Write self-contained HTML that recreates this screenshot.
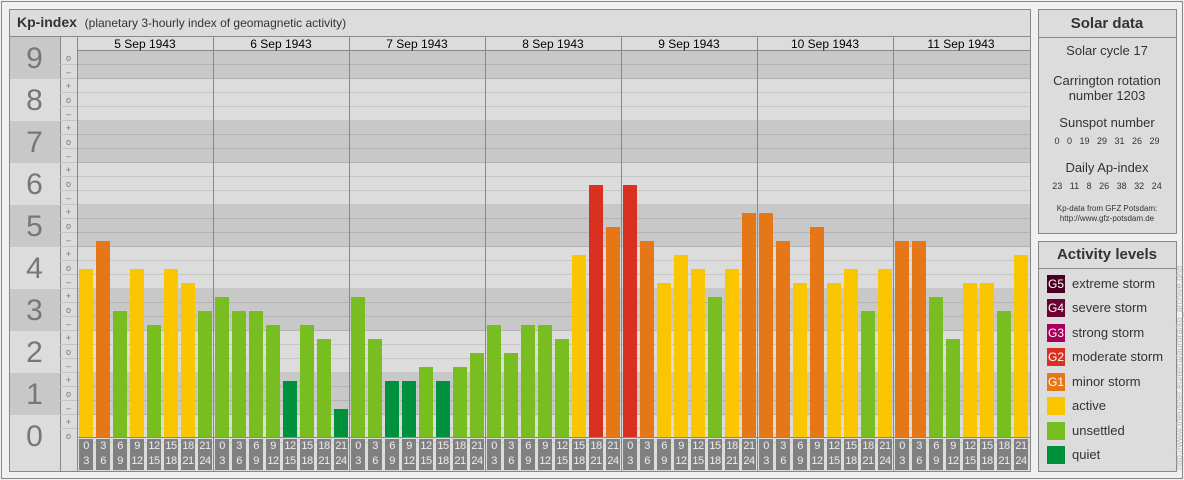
<!DOCTYPE html>
<html><head><meta charset="utf-8"><style>
*{margin:0;padding:0;box-sizing:border-box}
body{width:1184px;height:480px;background:#f0f0f0;font-family:"Liberation Sans",sans-serif;position:relative;overflow:hidden}
.a{position:absolute}
#frame{left:1px;top:1px;width:1182px;height:478px;border:1px solid #888}
.panel{background:#dcdcdc;border:1px solid #888}
.num{position:absolute;left:9px;width:51px;font-size:30px;color:#777;text-align:center}
.sg{position:absolute;left:60px;width:17px;height:14px;font-size:9px;color:#777;text-align:center;line-height:14px;border-bottom:1px solid #c4c4c4}
.d{position:absolute;top:37px;width:136px;height:14px;font-size:12px;text-align:center;line-height:15px}
.vl{position:absolute;top:37px;width:1px;height:434px;background:#888}
.b{position:absolute;width:14px}
.y{background:#f9c600}.o{background:#e57716}.g{background:#78be20}.q{background:#00913f}.r{background:#d93020}
.l{position:absolute;top:439px;width:14px;height:31px;background:#808080;color:#eee;font-size:11px;line-height:15px;text-align:center;letter-spacing:-0.5px}
.sw{position:absolute;left:1047px;width:18px;height:18px;color:#fff;font-size:12px;line-height:18px;text-align:center}
.lt{position:absolute;left:1072px;font-size:13px;color:#333;line-height:18px}
.sd{position:absolute;left:1038px;width:138px;text-align:center;color:#333}
</style></head><body>
<div class="a" id="frame"></div>
<div class="a panel" style="left:9px;top:9px;width:1022px;height:463px"></div>
<div class="a" style="left:10px;top:10px;width:1020px;height:27px;border-bottom:1px solid #888"></div>
<div class="a" style="left:17px;top:14px;font-size:14px;color:#333"><b>Kp-index</b>&nbsp;&nbsp;<span style="font-size:12px">(planetary 3-hourly index of geomagnetic activity)</span></div>
<div class="a" style="left:10px;top:37px;width:50px;height:42px;background:#c8c8c8"></div>
<div class="a" style="left:77px;top:51px;width:953px;height:28px;background:#c8c8c8"></div>
<div class="a" style="left:10px;top:121px;width:50px;height:42px;background:#c8c8c8"></div>
<div class="a" style="left:77px;top:121px;width:953px;height:42px;background:#c8c8c8"></div>
<div class="a" style="left:10px;top:205px;width:50px;height:42px;background:#c8c8c8"></div>
<div class="a" style="left:77px;top:205px;width:953px;height:42px;background:#c8c8c8"></div>
<div class="a" style="left:10px;top:289px;width:50px;height:42px;background:#c8c8c8"></div>
<div class="a" style="left:77px;top:289px;width:953px;height:42px;background:#c8c8c8"></div>
<div class="a" style="left:10px;top:373px;width:50px;height:42px;background:#c8c8c8"></div>
<div class="a" style="left:77px;top:373px;width:953px;height:42px;background:#c8c8c8"></div>
<div class="a" style="left:77px;top:51px;width:953px;height:392px;background:repeating-linear-gradient(to bottom,transparent 0 13px,rgba(0,0,0,0.1) 13px 14px)"></div>
<div class="a" style="left:77px;top:50px;width:953px;height:1px;background:#888"></div>
<div class="a" style="left:60px;top:37px;width:1px;height:434px;background:#888"></div>
<div class="a" style="left:77px;top:37px;width:1px;height:434px;background:#888"></div>
<div class="num" style="top:42px">9</div>
<div class="num" style="top:84px">8</div>
<div class="num" style="top:126px">7</div>
<div class="num" style="top:168px">6</div>
<div class="num" style="top:210px">5</div>
<div class="num" style="top:252px">4</div>
<div class="num" style="top:294px">3</div>
<div class="num" style="top:336px">2</div>
<div class="num" style="top:378px">1</div>
<div class="num" style="top:420px">0</div>
<div class="sg" style="top:51px">o</div><div class="sg" style="top:65px">–</div>
<div class="sg" style="top:79px">+</div><div class="sg" style="top:93px">o</div><div class="sg" style="top:107px">–</div>
<div class="sg" style="top:121px">+</div><div class="sg" style="top:135px">o</div><div class="sg" style="top:149px">–</div>
<div class="sg" style="top:163px">+</div><div class="sg" style="top:177px">o</div><div class="sg" style="top:191px">–</div>
<div class="sg" style="top:205px">+</div><div class="sg" style="top:219px">o</div><div class="sg" style="top:233px">–</div>
<div class="sg" style="top:247px">+</div><div class="sg" style="top:261px">o</div><div class="sg" style="top:275px">–</div>
<div class="sg" style="top:289px">+</div><div class="sg" style="top:303px">o</div><div class="sg" style="top:317px">–</div>
<div class="sg" style="top:331px">+</div><div class="sg" style="top:345px">o</div><div class="sg" style="top:359px">–</div>
<div class="sg" style="top:373px">+</div><div class="sg" style="top:387px">o</div><div class="sg" style="top:401px">–</div>
<div class="sg" style="top:415px">+</div><div class="sg" style="top:429px;border:none">o</div>
<div class="d" style="left:77px">5 Sep 1943</div>
<div class="d" style="left:213px">6 Sep 1943</div>
<div class="d" style="left:349px">7 Sep 1943</div>
<div class="d" style="left:485px">8 Sep 1943</div>
<div class="d" style="left:621px">9 Sep 1943</div>
<div class="d" style="left:757px">10 Sep 1943</div>
<div class="d" style="left:893px">11 Sep 1943</div>
<div class="vl" style="left:213px"></div><div class="vl" style="left:349px"></div><div class="vl" style="left:485px"></div><div class="vl" style="left:621px"></div><div class="vl" style="left:757px"></div><div class="vl" style="left:893px"></div>
<div class="b y" style="left:79px;top:269px;height:168px"></div>
<div class="b o" style="left:96px;top:241px;height:196px"></div>
<div class="b g" style="left:113px;top:311px;height:126px"></div>
<div class="b y" style="left:130px;top:269px;height:168px"></div>
<div class="b g" style="left:147px;top:325px;height:112px"></div>
<div class="b y" style="left:164px;top:269px;height:168px"></div>
<div class="b y" style="left:181px;top:283px;height:154px"></div>
<div class="b g" style="left:198px;top:311px;height:126px"></div>
<div class="b g" style="left:215px;top:297px;height:140px"></div>
<div class="b g" style="left:232px;top:311px;height:126px"></div>
<div class="b g" style="left:249px;top:311px;height:126px"></div>
<div class="b g" style="left:266px;top:325px;height:112px"></div>
<div class="b q" style="left:283px;top:381px;height:56px"></div>
<div class="b g" style="left:300px;top:325px;height:112px"></div>
<div class="b g" style="left:317px;top:339px;height:98px"></div>
<div class="b q" style="left:334px;top:409px;height:28px"></div>
<div class="b g" style="left:351px;top:297px;height:140px"></div>
<div class="b g" style="left:368px;top:339px;height:98px"></div>
<div class="b q" style="left:385px;top:381px;height:56px"></div>
<div class="b q" style="left:402px;top:381px;height:56px"></div>
<div class="b g" style="left:419px;top:367px;height:70px"></div>
<div class="b q" style="left:436px;top:381px;height:56px"></div>
<div class="b g" style="left:453px;top:367px;height:70px"></div>
<div class="b g" style="left:470px;top:353px;height:84px"></div>
<div class="b g" style="left:487px;top:325px;height:112px"></div>
<div class="b g" style="left:504px;top:353px;height:84px"></div>
<div class="b g" style="left:521px;top:325px;height:112px"></div>
<div class="b g" style="left:538px;top:325px;height:112px"></div>
<div class="b g" style="left:555px;top:339px;height:98px"></div>
<div class="b y" style="left:572px;top:255px;height:182px"></div>
<div class="b r" style="left:589px;top:185px;height:252px"></div>
<div class="b o" style="left:606px;top:227px;height:210px"></div>
<div class="b r" style="left:623px;top:185px;height:252px"></div>
<div class="b o" style="left:640px;top:241px;height:196px"></div>
<div class="b y" style="left:657px;top:283px;height:154px"></div>
<div class="b y" style="left:674px;top:255px;height:182px"></div>
<div class="b y" style="left:691px;top:269px;height:168px"></div>
<div class="b g" style="left:708px;top:297px;height:140px"></div>
<div class="b y" style="left:725px;top:269px;height:168px"></div>
<div class="b o" style="left:742px;top:213px;height:224px"></div>
<div class="b o" style="left:759px;top:213px;height:224px"></div>
<div class="b o" style="left:776px;top:241px;height:196px"></div>
<div class="b y" style="left:793px;top:283px;height:154px"></div>
<div class="b o" style="left:810px;top:227px;height:210px"></div>
<div class="b y" style="left:827px;top:283px;height:154px"></div>
<div class="b y" style="left:844px;top:269px;height:168px"></div>
<div class="b g" style="left:861px;top:311px;height:126px"></div>
<div class="b y" style="left:878px;top:269px;height:168px"></div>
<div class="b o" style="left:895px;top:241px;height:196px"></div>
<div class="b o" style="left:912px;top:241px;height:196px"></div>
<div class="b g" style="left:929px;top:297px;height:140px"></div>
<div class="b g" style="left:946px;top:339px;height:98px"></div>
<div class="b y" style="left:963px;top:283px;height:154px"></div>
<div class="b y" style="left:980px;top:283px;height:154px"></div>
<div class="b g" style="left:997px;top:311px;height:126px"></div>
<div class="b y" style="left:1014px;top:255px;height:182px"></div>
<div class="a" style="left:77px;top:437px;width:953px;height:1px;background:#888"></div>
<div class="l" style="left:79px">0<br>3</div><div class="l" style="left:96px">3<br>6</div><div class="l" style="left:113px">6<br>9</div><div class="l" style="left:130px">9<br>12</div><div class="l" style="left:147px">12<br>15</div><div class="l" style="left:164px">15<br>18</div><div class="l" style="left:181px">18<br>21</div><div class="l" style="left:198px">21<br>24</div>
<div class="l" style="left:215px">0<br>3</div><div class="l" style="left:232px">3<br>6</div><div class="l" style="left:249px">6<br>9</div><div class="l" style="left:266px">9<br>12</div><div class="l" style="left:283px">12<br>15</div><div class="l" style="left:300px">15<br>18</div><div class="l" style="left:317px">18<br>21</div><div class="l" style="left:334px">21<br>24</div>
<div class="l" style="left:351px">0<br>3</div><div class="l" style="left:368px">3<br>6</div><div class="l" style="left:385px">6<br>9</div><div class="l" style="left:402px">9<br>12</div><div class="l" style="left:419px">12<br>15</div><div class="l" style="left:436px">15<br>18</div><div class="l" style="left:453px">18<br>21</div><div class="l" style="left:470px">21<br>24</div>
<div class="l" style="left:487px">0<br>3</div><div class="l" style="left:504px">3<br>6</div><div class="l" style="left:521px">6<br>9</div><div class="l" style="left:538px">9<br>12</div><div class="l" style="left:555px">12<br>15</div><div class="l" style="left:572px">15<br>18</div><div class="l" style="left:589px">18<br>21</div><div class="l" style="left:606px">21<br>24</div>
<div class="l" style="left:623px">0<br>3</div><div class="l" style="left:640px">3<br>6</div><div class="l" style="left:657px">6<br>9</div><div class="l" style="left:674px">9<br>12</div><div class="l" style="left:691px">12<br>15</div><div class="l" style="left:708px">15<br>18</div><div class="l" style="left:725px">18<br>21</div><div class="l" style="left:742px">21<br>24</div>
<div class="l" style="left:759px">0<br>3</div><div class="l" style="left:776px">3<br>6</div><div class="l" style="left:793px">6<br>9</div><div class="l" style="left:810px">9<br>12</div><div class="l" style="left:827px">12<br>15</div><div class="l" style="left:844px">15<br>18</div><div class="l" style="left:861px">18<br>21</div><div class="l" style="left:878px">21<br>24</div>
<div class="l" style="left:895px">0<br>3</div><div class="l" style="left:912px">3<br>6</div><div class="l" style="left:929px">6<br>9</div><div class="l" style="left:946px">9<br>12</div><div class="l" style="left:963px">12<br>15</div><div class="l" style="left:980px">15<br>18</div><div class="l" style="left:997px">18<br>21</div><div class="l" style="left:1014px">21<br>24</div>
<div class="a panel" style="left:1038px;top:9px;width:139px;height:225px"></div>
<div class="a" style="left:1039px;top:37px;width:137px;height:1px;background:#888"></div>
<div class="sd" style="top:15px;font-size:15px;font-weight:bold">Solar data</div>
<div class="sd" style="top:43px;font-size:13px">Solar cycle 17</div>
<div class="sd" style="top:73px;font-size:13px;line-height:15px">Carrington rotation<br>number 1203</div>
<div class="sd" style="top:115px;font-size:13px">Sunspot number</div>
<div class="sd" style="top:136px;font-size:9px;word-spacing:5px">0 0 19 29 31 26 29</div>
<div class="sd" style="top:160px;font-size:13px">Daily Ap-index</div>
<div class="sd" style="top:181px;font-size:9px;word-spacing:5px">23 11 8 26 38 32 24</div>
<div class="sd" style="top:204px;font-size:8px;line-height:10px">Kp-data from GFZ Potsdam:<br>http://www.gfz-potsdam.de</div>
<div class="a panel" style="left:1038px;top:241px;width:139px;height:231px"></div>
<div class="a" style="left:1039px;top:268px;width:137px;height:1px;background:#888"></div>
<div class="sd" style="top:246px;font-size:15px;font-weight:bold">Activity levels</div>
<div class="sw" style="top:275px;background:#4a0020">G5</div><div class="lt" style="top:275px">extreme storm</div>
<div class="sw" style="top:299px;background:#6b0033">G4</div><div class="lt" style="top:299px">severe storm</div>
<div class="sw" style="top:324px;background:#a8005a">G3</div><div class="lt" style="top:324px">strong storm</div>
<div class="sw" style="top:348px;background:#d93020">G2</div><div class="lt" style="top:348px">moderate storm</div>
<div class="sw" style="top:373px;background:#e57716">G1</div><div class="lt" style="top:373px">minor storm</div>
<div class="sw y" style="top:397px"></div><div class="lt" style="top:397px">active</div>
<div class="sw g" style="top:422px"></div><div class="lt" style="top:422px">unsettled</div>
<div class="sw q" style="top:446px"></div><div class="lt" style="top:446px">quiet</div>
<div class="a" style="left:1174px;top:470px;transform:rotate(-90deg);transform-origin:0 0;font-size:9px;color:#bbb;white-space:nowrap;width:230px;text-align:left">http://www.theusner.eu/terra/aurora/kp_archive.php</div>
</body></html>
